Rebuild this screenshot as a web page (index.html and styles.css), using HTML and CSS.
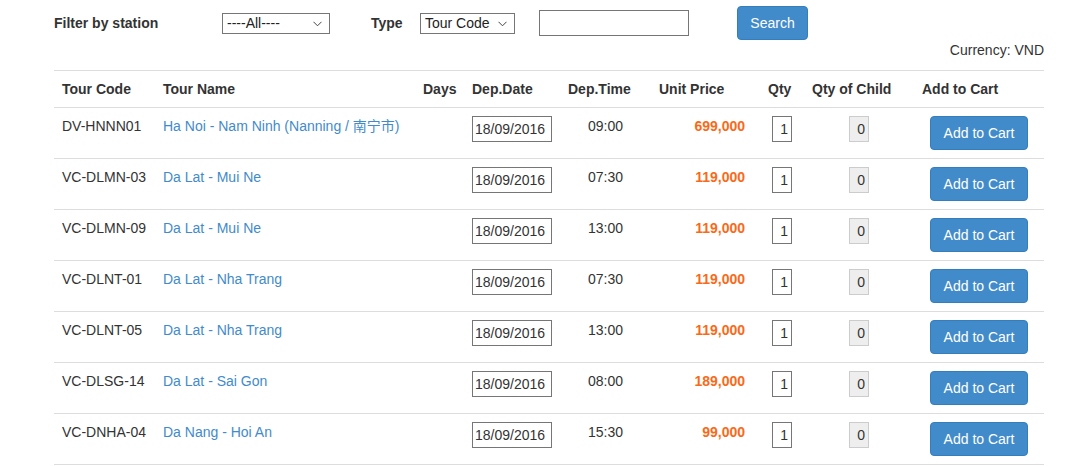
FILE: index.html
```html
<!DOCTYPE html>
<html>
<head>
<meta charset="utf-8">
<title>Tours</title>
<link rel="stylesheet" href="styles.css">
</head>
<body>
<div class="page">
  <form class="filter">
    <label class="lbl lbl-station">Filter by station</label>
    <span class="sel-wrap">
      <select class="sel sel-station"><option>----All----</option></select>
      <svg class="chev" width="9" height="6" viewBox="0 0 9 6"><polyline points="0.5,0.8 4.5,4.8 8.5,0.8" fill="none" stroke="#444" stroke-width="1"/></svg>
    </span>
    <label class="lbl lbl-type">Type</label>
    <span class="sel-wrap">
      <select class="sel sel-type"><option>Tour Code</option></select>
      <svg class="chev" width="9" height="6" viewBox="0 0 9 6"><polyline points="0.5,0.8 4.5,4.8 8.5,0.8" fill="none" stroke="#444" stroke-width="1"/></svg>
    </span>
    <input class="txt-search" type="text">
    <button type="button" class="btn btn-search">Search</button>
  </form>
  <div class="currency">Currency: VND</div>
  <table class="tours">
    <colgroup>
      <col style="width:101px"><col style="width:260px"><col style="width:49px"><col style="width:96px"><col style="width:91px"><col style="width:109px"><col style="width:44px"><col style="width:110px"><col style="width:130px">
    </colgroup>
    <thead>
      <tr><th>Tour Code</th><th>Tour Name</th><th>Days</th><th>Dep.Date</th><th>Dep.Time</th><th>Unit Price</th><th>Qty</th><th>Qty of Child</th><th>Add to Cart</th></tr>
    </thead>
    <tbody>
      <tr><td>DV-HNNN01</td><td><a href="#">Ha Noi - Nam Ninh (Nanning / 南宁市)</a></td><td></td><td><input class="date" value="18/09/2016"></td><td class="c">09:00</td><td class="price">699,000</td><td class="c"><input class="qty" value="1"></td><td class="c"><input class="child" value="0" disabled></td><td class="c"><button class="btn btn-cart">Add to Cart</button></td></tr>
      <tr><td>VC-DLMN-03</td><td><a href="#">Da Lat - Mui Ne</a></td><td></td><td><input class="date" value="18/09/2016"></td><td class="c">07:30</td><td class="price">119,000</td><td class="c"><input class="qty" value="1"></td><td class="c"><input class="child" value="0" disabled></td><td class="c"><button class="btn btn-cart">Add to Cart</button></td></tr>
      <tr><td>VC-DLMN-09</td><td><a href="#">Da Lat - Mui Ne</a></td><td></td><td><input class="date" value="18/09/2016"></td><td class="c">13:00</td><td class="price">119,000</td><td class="c"><input class="qty" value="1"></td><td class="c"><input class="child" value="0" disabled></td><td class="c"><button class="btn btn-cart">Add to Cart</button></td></tr>
      <tr><td>VC-DLNT-01</td><td><a href="#">Da Lat - Nha Trang</a></td><td></td><td><input class="date" value="18/09/2016"></td><td class="c">07:30</td><td class="price">119,000</td><td class="c"><input class="qty" value="1"></td><td class="c"><input class="child" value="0" disabled></td><td class="c"><button class="btn btn-cart">Add to Cart</button></td></tr>
      <tr><td>VC-DLNT-05</td><td><a href="#">Da Lat - Nha Trang</a></td><td></td><td><input class="date" value="18/09/2016"></td><td class="c">13:00</td><td class="price">119,000</td><td class="c"><input class="qty" value="1"></td><td class="c"><input class="child" value="0" disabled></td><td class="c"><button class="btn btn-cart">Add to Cart</button></td></tr>
      <tr><td>VC-DLSG-14</td><td><a href="#">Da Lat - Sai Gon</a></td><td></td><td><input class="date" value="18/09/2016"></td><td class="c">08:00</td><td class="price">189,000</td><td class="c"><input class="qty" value="1"></td><td class="c"><input class="child" value="0" disabled></td><td class="c"><button class="btn btn-cart">Add to Cart</button></td></tr>
      <tr><td>VC-DNHA-04</td><td><a href="#">Da Nang - Hoi An</a></td><td></td><td><input class="date" value="18/09/2016"></td><td class="c">15:30</td><td class="price">99,000</td><td class="c"><input class="qty" value="1"></td><td class="c"><input class="child" value="0" disabled></td><td class="c"><button class="btn btn-cart">Add to Cart</button></td></tr>
    </tbody>
  </table>
</div>
</body>
</html>
```
FILE: styles.css
```css
html, body {
  margin: 0;
  padding: 0;
  background: #fff;
}
body {
  font-family: "Liberation Sans", Arial, "Noto Sans CJK SC", sans-serif;
  font-size: 14px;
  line-height: 20px;
  color: #333;
}
.page {
  padding: 6px 34px 0 54px;
}
.filter {
  display: flex;
  align-items: center;
  height: 34px;
  margin: 0;
}
.lbl {
  font-weight: bold;
}
.lbl-station {
  width: 168px;
}
.lbl-type {
  margin-left: 41px;
  width: 49px;
}
.sel-wrap {
  position: relative;
  display: inline-block;
  height: 21px;
}
.sel {
  -webkit-appearance: none;
  appearance: none;
  display: block;
  height: 21px;
  box-sizing: border-box;
  font-family: "Liberation Sans", Arial, sans-serif;
  font-size: 14px;
  line-height: 19px;
  color: #222;
  background: #fff;
  border: 1px solid #767676;
  border-radius: 0;
  padding: 0 0 0 4px;
  margin: 0;
}
.chev {
  position: absolute;
  top: 8px;
  right: 8px;
  pointer-events: none;
}
.sel-station {
  width: 108px;
}
.sel-type {
  width: 95px;
}
.txt-search {
  margin-left: 24px;
  width: 150px;
  height: 26px;
  box-sizing: border-box;
  border: 1px solid #767676;
  padding: 0 3px;
  font-family: "Liberation Sans", Arial, sans-serif;
  font-size: 14px;
}
.btn {
  display: inline-block;
  height: 34px;
  box-sizing: border-box;
  padding: 6px 12px;
  font-family: "Liberation Sans", Arial, sans-serif;
  font-size: 14px;
  line-height: 20px;
  color: #fff;
  background: #428bca;
  border: 1px solid #357ebd;
  border-radius: 4px;
  cursor: pointer;
  margin: 0;
}
.btn-search {
  margin-left: 48px;
  width: 71px;
  padding: 6px 0;
}
.btn-cart {
  width: 98px;
  padding: 6px 0;
}
.currency {
  text-align: right;
  line-height: 20px;
}
.tours {
  margin-top: 10px;
  width: 990px;
  table-layout: fixed;
  border-collapse: collapse;
  border-spacing: 0;
}
.tours th,
.tours td {
  padding: 8px;
  line-height: 20px;
  text-align: left;
  vertical-align: top;
  border-top: 1px solid #ddd;
  white-space: nowrap;
}
.tours th {
  font-weight: bold;
}
.tours tbody tr:last-child td {
  border-bottom: 1px solid #ddd;
}
.tours td.c {
  text-align: center;
}
.tours td.price {
  text-align: right;
  padding-right: 15px;
  font-weight: bold;
  color: #f96a18;
}
.tours a {
  color: #428bca;
  text-decoration: none;
}
.tours input {
  box-sizing: border-box;
  height: 26px;
  margin: 0;
  font-family: "Liberation Sans", Arial, sans-serif;
  font-size: 14px;
  color: #333;
  vertical-align: top;
}
.date {
  width: 80px;
  border: 1px solid #767676;
  padding: 0 2px;
}
.qty {
  width: 20px;
  border: 1px solid #767676;
  padding: 0 3px 0 0;
  text-align: right;
}
.child {
  width: 20px;
  border: 1px solid #ccc;
  background: #eee;
  padding: 0 3px 0 0;
  text-align: right;
}
.tours input.child:disabled {
  color: #333;
  background: #eee;
}
```
